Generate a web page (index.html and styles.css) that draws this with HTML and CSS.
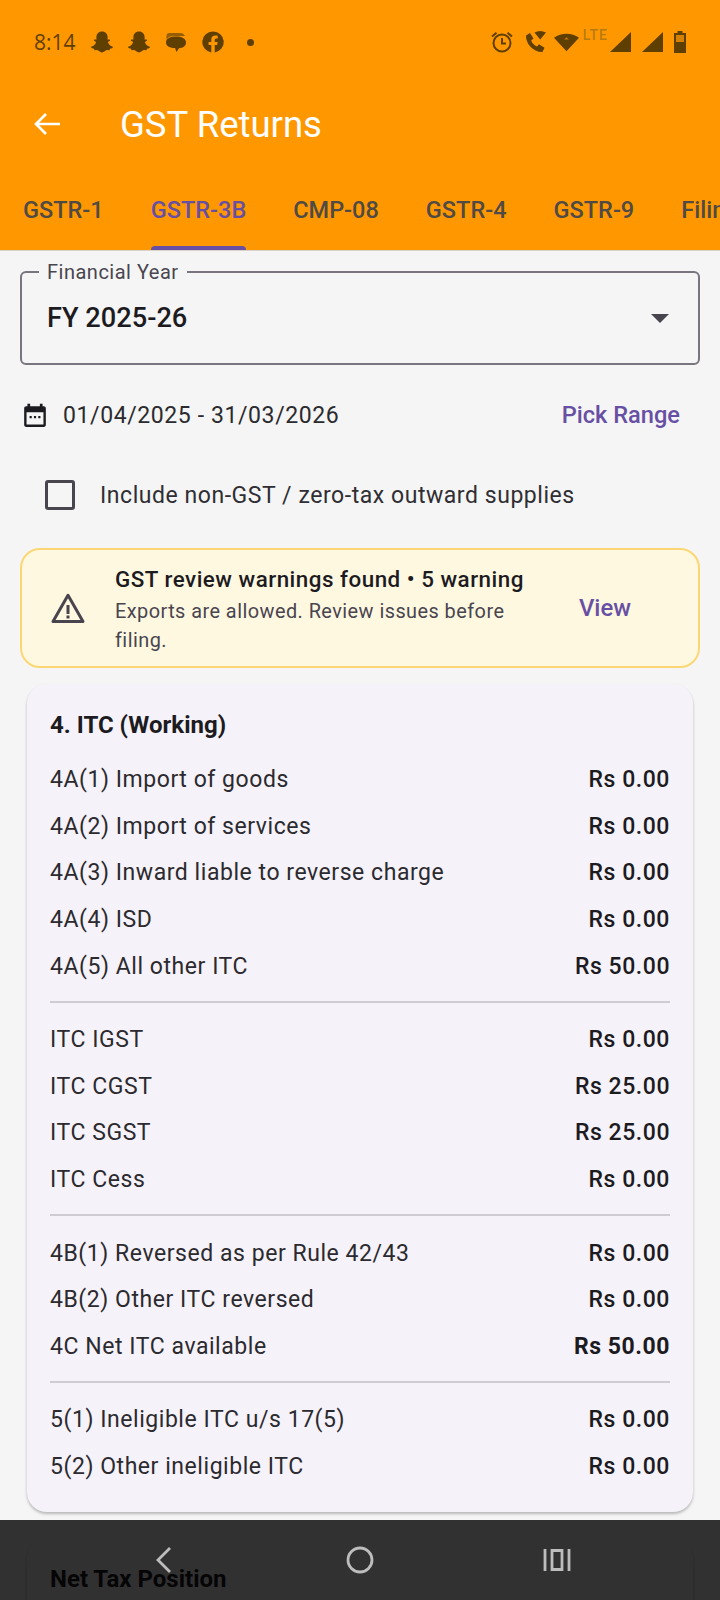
FILE: index.html
```html
<!DOCTYPE html>
<html lang="en">
<head>
    <meta charset="UTF-8">
    <meta name="viewport" content="width=device-width, initial-scale=1.0">
    <title>GST Returns</title>
    <link rel="stylesheet" href="styles.css">
</head>
<body>
    <div class="screen">
        <header class="appbar">
            <div class="status">
                <div class="status-left">
                    <span class="clock">8:14</span>
                    <svg class="st" viewBox="0 0 24 24"><path d="M12 1.500c3.600 0 5.600 2.700 5.600 5.700v2.600l1.700-.6.9 1.200-2.300 1.500c.6 2.200 2.200 3.900 5 4.900l-.3 1.300-2.600.6-.5 1.600-2.600-.2c-1.500 0-2.700 2.400-4.900 2.400s-3.400-2.400-4.900-2.400l-2.600.2-.5-1.600-2.600-.6-.3-1.300c2.800-1 4.400-2.700 5-4.900L3.800 10.400l.9-1.200 1.700.6V7.200c0-3 2-5.700 5.600-5.700z"/></svg>
                    <svg class="st" viewBox="0 0 24 24"><path d="M12 1.500c3.600 0 5.600 2.700 5.600 5.700v2.600l1.700-.6.9 1.200-2.300 1.500c.6 2.200 2.200 3.900 5 4.900l-.3 1.300-2.600.6-.5 1.600-2.600-.2c-1.500 0-2.700 2.400-4.900 2.400s-3.400-2.400-4.900-2.400l-2.600.2-.5-1.600-2.600-.6-.3-1.300c2.800-1 4.400-2.700 5-4.900L3.800 10.400l.9-1.200 1.700.6V7.200c0-3 2-5.700 5.600-5.700z"/></svg>
                    <svg class="st" viewBox="0 0 24 24"><path opacity=".65" d="M5 3h11c2.500 0 4 1 5 3H9C6 6 3.500 7.500 3 10 1.800 6.500 2.500 3 5 3z"/><path d="M12 6.500c5.500 0 10 1.900 10 6s-3.600 5.500-7 5.700L12.500 22l-1.500-3.900c-4.800-.2-9-1.700-9-5.600 0-4.100 4.500-6 10-6z"/></svg>
                    <svg class="st" viewBox="0 0 24 24"><path d="M12 1.500a10.500 10.500 0 0 0-1.700 20.900v-7.400H7.600v-3h2.700V9.700c0-2.700 1.600-4.100 4-4.100 1.200 0 2.400.2 2.400.2v2.600h-1.300c-1.300 0-1.700.8-1.700 1.600V12h2.900l-.5 3h-2.400v7.400A10.500 10.500 0 0 0 12 1.500z"/></svg>
                    <span class="dot"></span>
                </div>
                <div class="status-right">
                    <svg class="st alarm" viewBox="0 0 24 24"><circle cx="12" cy="13" r="8.500" fill="none" stroke="#5f3f00" stroke-width="2"/><path d="M12 8v5.500h4" fill="none" stroke="#5f3f00" stroke-width="2"/><path d="M2 6.500 6.500 2.800M22 6.500 17.500 2.800" stroke="#5f3f00" stroke-width="2"/></svg>
                    <svg class="st call" viewBox="0 0 24 24"><path d="M2 5.500 6 3l3.500 5.500-2.300 2c.9 2.600 3.200 5 5.800 6l2-2.300 5.500 3.500-2 4.300C9.500 22.500 1.500 13.500 2 5.500z"/><path d="M10.500 2.500c3.500-2 7.500-2 11.500 0l-5.800 7z"/></svg>
                    <svg class="st wifi" viewBox="0 0 28 24"><path d="M1 7.500C8.500 2 19.500 2 27 7.500L14 21.500z"/><path d="M11.500 9.500 14 7l2.500 2.500z" fill="#ff9800" opacity=".6"/></svg>
                    <span class="lte">LTE</span>
                    <svg class="st sig" viewBox="0 0 22 22"><path d="M22 1v20H1z"/></svg>
                    <svg class="st sig" viewBox="0 0 22 22"><path d="M22 1v20H1z"/></svg>
                    <svg class="st batt" viewBox="0 0 14 22"><path d="M4.500 0h5v2H13v20H1V2h3.500z"/><path d="M3 4h8v7H3z" fill="#ff9800" opacity=".75"/></svg>
                </div>
            </div>
            <div class="toolbar">
                <svg class="back" viewBox="0 0 28 24"><path d="M27 12H3M13 2 3 12l10 10" fill="none" stroke="#fff" stroke-width="2.600"/></svg>
                <h1>GST Returns</h1>
            </div>
            <nav class="tabs">
                <a class="tab">GSTR-1</a>
                <a class="tab active">GSTR-3B</a>
                <a class="tab">CMP-08</a>
                <a class="tab">GSTR-4</a>
                <a class="tab">GSTR-9</a>
                <a class="tab">Filing</a>
            </nav>
        </header>

        <main class="content">
            <div class="field">
                <span class="field-label">Financial Year</span>
                <span class="field-value">FY 2025-26</span>
                <span class="caret"></span>
            </div>

            <div class="range">
                <svg class="cal" viewBox="0 0 24 24"><path d="M5 1.500h2.500V4h9V1.500H19V4h1c1.200 0 2 .8 2 2v15c0 1.200-.8 2-2 2H4c-1.200 0-2-.8-2-2V6c0-1.200.8-2 2-2h1zM4.200 9.500v11.300h15.600V9.500z"/><path d="M7 13h2v2H7zM11 13h2v2h-2zM15 13h2v2h-2z"/></svg>
                <span class="range-text">01/04/2025 - 31/03/2026</span>
                <a class="pick">Pick Range</a>
            </div>

            <label class="check">
                <span class="box"></span>
                <span>Include non-GST / zero-tax outward supplies</span>
            </label>

            <div class="warning">
                <svg class="warn-icon" viewBox="0 0 24 24"><path d="M12 3.500 22 21H2z" fill="none" stroke="#49454f" stroke-width="2" stroke-linejoin="round"/><path d="M11 10h2v6h-2zM11 17h2v2h-2z" fill="#49454f"/></svg>
                <div class="warn-body">
                    <div class="warn-title">GST review warnings found • 5 warning</div>
                    <div class="warn-sub">Exports are allowed. Review issues before filing.</div>
                </div>
                <a class="warn-view">View</a>
            </div>

            <section class="card">
                <h2>4. ITC (Working)</h2>
                <div class="group">
                    <div class="row"><span>4A(1) Import of goods</span><b>Rs 0.00</b></div>
                    <div class="row"><span>4A(2) Import of services</span><b>Rs 0.00</b></div>
                    <div class="row"><span>4A(3) Inward liable to reverse charge</span><b>Rs 0.00</b></div>
                    <div class="row"><span>4A(4) ISD</span><b>Rs 0.00</b></div>
                    <div class="row"><span>4A(5) All other ITC</span><b>Rs 50.00</b></div>
                </div>
                <div class="group">
                    <div class="row"><span>ITC IGST</span><b>Rs 0.00</b></div>
                    <div class="row"><span>ITC CGST</span><b>Rs 25.00</b></div>
                    <div class="row"><span>ITC SGST</span><b>Rs 25.00</b></div>
                    <div class="row"><span>ITC Cess</span><b>Rs 0.00</b></div>
                </div>
                <div class="group">
                    <div class="row"><span>4B(1) Reversed as per Rule 42/43</span><b>Rs 0.00</b></div>
                    <div class="row"><span>4B(2) Other ITC reversed</span><b>Rs 0.00</b></div>
                    <div class="row"><span>4C Net ITC available</span><b class="strong">Rs 50.00</b></div>
                </div>
                <div class="group">
                    <div class="row"><span>5(1) Ineligible ITC u/s 17(5)</span><b>Rs 0.00</b></div>
                    <div class="row"><span>5(2) Other ineligible ITC</span><b>Rs 0.00</b></div>
                </div>
            </section>

            <section class="card">
                <h2>Net Tax Position</h2>
            </section>
        </main>

        <div class="navbar">
            <svg class="nav-icon" viewBox="0 0 30 30"><path d="M22 3 10 15l12 12" fill="none" stroke="#bdbdbd" stroke-width="2.800"/></svg>
            <svg class="nav-icon" viewBox="0 0 30 30"><circle cx="15" cy="15" r="12" fill="none" stroke="#bdbdbd" stroke-width="2.800"/></svg>
            <svg class="nav-icon" viewBox="0 0 30 30"><path d="M3 4v22M27 4v22M10 5.500h10v19H10z" fill="none" stroke="#bdbdbd" stroke-width="2.800"/></svg>
        </div>
    </div>
</body>
</html>
```

FILE: styles.css
```css
* {
    box-sizing: border-box;
}
body {
    margin: 0;
    font-family: Roboto, "Noto Sans", sans-serif;
    background-color: #f5f5f5;
    color: #1c1b1f;
}
.screen {
    position: relative;
    width: 720px;
    height: 1600px;
    overflow: hidden;
    background-color: #f5f5f5;
}

/* header */
.appbar {
    height: 251px;
    background-color: #ff9800;
    border-bottom: 1px solid #d8d2c8;
}
.status {
    height: 84px;
    padding: 0 33px 0 34px;
    display: flex;
    justify-content: space-between;
    align-items: center;
}
.status-left, .status-right {
    display: flex;
    align-items: center;
}
.clock {
    font-family: "Open Sans", Roboto, sans-serif;
    font-size: 21px;
    color: #5f3f00;
    margin-right: 14px;
}
.st {
    width: 24px;
    height: 24px;
    fill: #5f3f00;
    margin-right: 13px;
}
.dot {
    width: 7px;
    height: 7px;
    border-radius: 50%;
    background-color: #5f3f00;
    margin-left: 9px;
}
.status-right .st {
    margin-right: 8px;
}
.status-right .alarm {
    margin-right: 10px;
}
.status-right .call {
    margin-right: 5px;
}
.status-right .wifi {
    width: 27px;
    margin-right: 3px;
}
.lte {
    font-size: 14px;
    font-weight: 500;
    letter-spacing: 1px;
    color: #b87a10;
    margin: -14px 1px 0 0;
}
.status-right .sig {
    width: 22px;
    height: 22px;
    margin-right: 10px;
}
.status-right .batt {
    width: 14px;
    height: 22px;
    margin-right: 0;
}
.toolbar {
    height: 80px;
    display: flex;
    align-items: center;
    padding-left: 33px;
}
.back {
    width: 28px;
    height: 24px;
    margin-right: 59px;
}
.toolbar h1 {
    margin: 0;
    font-size: 36.500px;
    font-weight: 400;
    color: #fff;
}
.tabs {
    display: flex;
    gap: 47px;
    padding: 0 0 0 23px;
    height: 86px;
    overflow: hidden;
}
.tab {
    position: relative;
    display: block;
    font-size: 23.500px;
    font-weight: 500;
    line-height: 28px;
    padding-top: 32px;
    color: #4f4a45;
    white-space: nowrap;
}
.tab.active {
    color: #6750a4;
}
.tab.active::after {
    content: "";
    position: absolute;
    left: 0;
    right: 0;
    top: 82px;
    height: 4px;
    border-radius: 4px 4px 0 0;
    background-color: #6750a4;
}

/* filters */
.content {
    padding: 20px 20px 0;
}
.field {
    position: relative;
    height: 94px;
    border: 2px solid #79747e;
    border-radius: 6px;
    display: flex;
    align-items: center;
    padding: 0 24px 0 25px;
}
.field-label {
    position: absolute;
    left: 17px;
    top: -13px;
    padding: 0 8px;
    background-color: #f5f5f5;
    font-size: 20px;
    line-height: 24px;
    letter-spacing: .5px;
    color: #49454f;
}
.field-value {
    font-size: 27.200px;
    font-weight: 500;
}
.caret {
    margin-left: auto;
    margin-right: 5px;
    border-left: 9px solid transparent;
    border-right: 9px solid transparent;
    border-top: 9px solid #49454f;
}
.range {
    display: flex;
    align-items: center;
    height: 50px;
    margin-top: 25px;
    padding: 0 20px 0 2px;
}
.cal {
    width: 26px;
    height: 26px;
    fill: #1c1b1f;
    margin-right: 15px;
}
.range-text {
    font-size: 23px;
    letter-spacing: .6px;
    color: #2b2a2e;
}
.pick {
    margin-left: auto;
    font-size: 23.600px;
    font-weight: 500;
    color: #6750a4;
}
.check {
    display: flex;
    align-items: center;
    height: 50px;
    margin-top: 30px;
    padding-left: 25px;
    font-size: 23px;
    letter-spacing: .55px;
    color: #2f2e33;
}
.box {
    width: 30px;
    height: 30px;
    border: 3px solid #49454f;
    border-radius: 3px;
    margin-right: 25px;
}

/* warning */
.warning {
    display: flex;
    align-items: center;
    height: 120px;
    margin-top: 28px;
    padding: 0 67px 0 28px;
    background-color: #fff8e1;
    border: 2px solid #fbd774;
    border-radius: 20px;
}
.warn-icon {
    width: 36px;
    height: 36px;
    margin-right: 29px;
    flex: none;
}
.warn-body {
    flex: 1;
    margin-top: 2px;
}
.warn-title {
    font-size: 22.400px;
    font-weight: 500;
    letter-spacing: .5px;
    line-height: 30px;
}
.warn-sub {
    font-size: 19.900px;
    letter-spacing: .45px;
    line-height: 29px;
    margin-top: 3px;
    width: 420px;
    color: #49454f;
}
.warn-view {
    font-size: 23.900px;
    font-weight: 500;
    color: #6750a4;
}

/* cards */
.card {
    margin: 16px 7px 0;
    padding: 26px 23px 0;
    height: 828px;
    background-color: #f6f2fa;
    border-radius: 20px;
    box-shadow: 0 2px 3px rgba(0, 0, 0, .25);
}
.card + .card {
    margin-top: 26px;
}
.card h2 {
    margin: 0 0 3px;
    font-size: 24px;
    font-weight: 700;
    line-height: 30px;
}
.group {
    padding: 12.500px 0;
    border-bottom: 2px solid #cfccd4;
}
.group:last-child {
    border-bottom: 0;
}
.row {
    display: flex;
    justify-content: space-between;
    align-items: center;
    height: 46.600px;
    padding-top: 2px;
    font-size: 23px;
    letter-spacing: .55px;
    color: #2b2a2e;
}
.row b {
    font-weight: 500;
    color: #1c1b1f;
}
.row b.strong {
    font-weight: 700;
}
.navbar {
    position: absolute;
    left: 0;
    right: 0;
    bottom: 0;
    height: 80px;
    display: flex;
    justify-content: center;
    gap: 167px;
    padding-top: 25px;
    background-color: rgba(0, 0, 0, .8);
}
.nav-icon {
    width: 30px;
    height: 30px;
}
```
